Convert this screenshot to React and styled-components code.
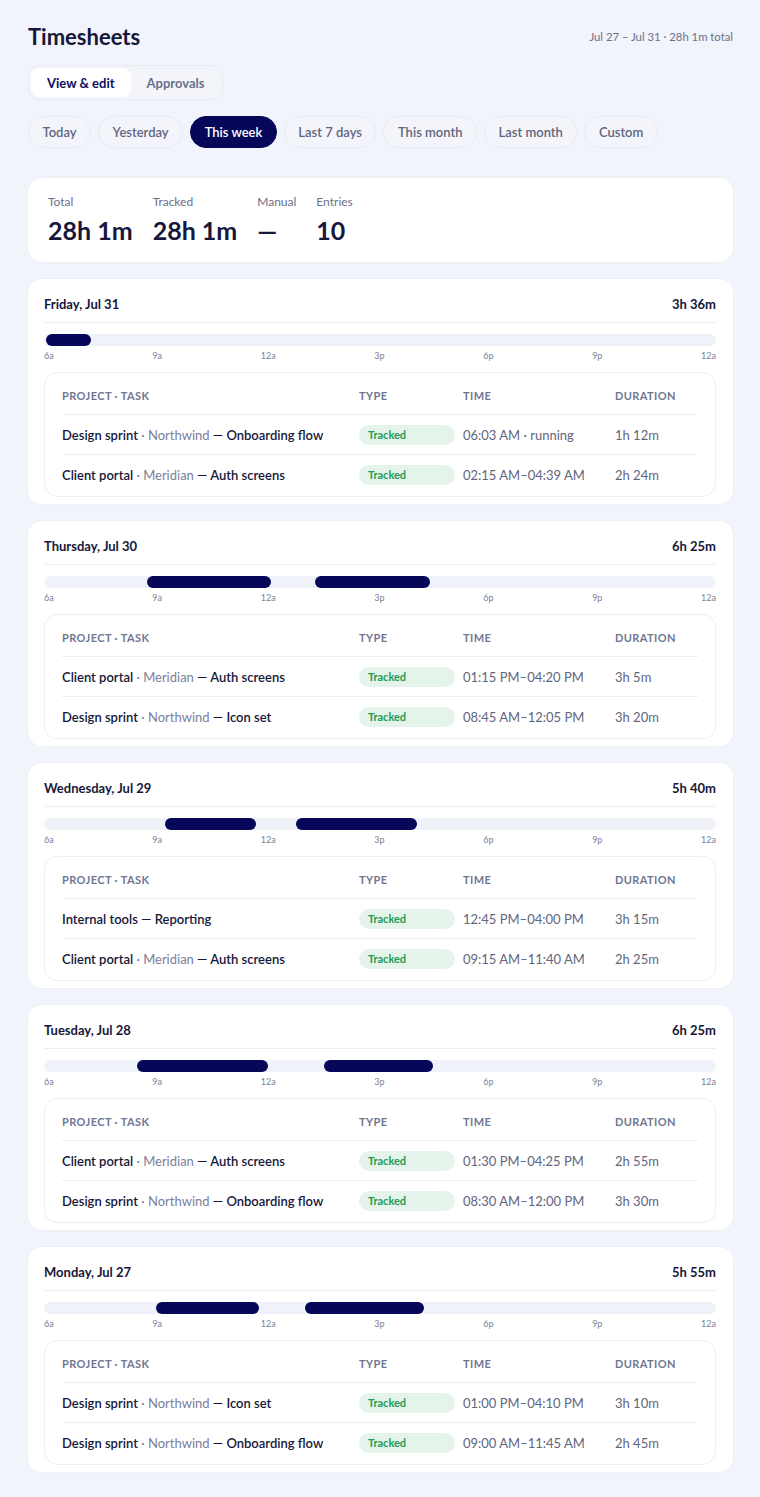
import React from "react";
import styled, { createGlobalStyle } from "styled-components";

const GlobalStyle = createGlobalStyle`
  html, body {
    margin: 0;
    padding: 0;
    background: #f2f4fb;
  }
  body {
    font-family: Lato, "Noto Sans", sans-serif;
    color: #16173a;
    -webkit-font-smoothing: antialiased;
  }
`;

const DAY_START = 6;
const DAY_HOURS = 18;

const days = [
  {
    title: "Friday, Jul 31",
    total: "3h 36m",
    bars: [[6.05, 7.25]],
    entries: [
      { project: "Design sprint", client: "Northwind", task: "Onboarding flow", time: "06:03 AM · running", duration: "1h 12m" },
      { project: "Client portal", client: "Meridian", task: "Auth screens", time: "02:15 AM–04:39 AM", duration: "2h 24m" },
    ],
  },
  {
    title: "Thursday, Jul 30",
    total: "6h 25m",
    bars: [[8.75, 12.083], [13.25, 16.333]],
    entries: [
      { project: "Client portal", client: "Meridian", task: "Auth screens", time: "01:15 PM–04:20 PM", duration: "3h 5m" },
      { project: "Design sprint", client: "Northwind", task: "Icon set", time: "08:45 AM–12:05 PM", duration: "3h 20m" },
    ],
  },
  {
    title: "Wednesday, Jul 29",
    total: "5h 40m",
    bars: [[9.25, 11.667], [12.75, 16]],
    entries: [
      { project: "Internal tools", task: "Reporting", time: "12:45 PM–04:00 PM", duration: "3h 15m" },
      { project: "Client portal", client: "Meridian", task: "Auth screens", time: "09:15 AM–11:40 AM", duration: "2h 25m" },
    ],
  },
  {
    title: "Tuesday, Jul 28",
    total: "6h 25m",
    bars: [[8.5, 12], [13.5, 16.417]],
    entries: [
      { project: "Client portal", client: "Meridian", task: "Auth screens", time: "01:30 PM–04:25 PM", duration: "2h 55m" },
      { project: "Design sprint", client: "Northwind", task: "Onboarding flow", time: "08:30 AM–12:00 PM", duration: "3h 30m" },
    ],
  },
  {
    title: "Monday, Jul 27",
    total: "5h 55m",
    bars: [[9, 11.75], [13, 16.167]],
    entries: [
      { project: "Design sprint", client: "Northwind", task: "Icon set", time: "01:00 PM–04:10 PM", duration: "3h 10m" },
      { project: "Design sprint", client: "Northwind", task: "Onboarding flow", time: "09:00 AM–11:45 AM", duration: "2h 45m" },
    ],
  },
];

const ranges = ["Today", "Yesterday", "This week", "Last 7 days", "This month", "Last month", "Custom"];
const hourLabels = ["6a", "9a", "12a", "3p", "6p", "9p", "12a"];

const Page = styled.div`
  padding: 24px 27px 24px 28px;
`;

const TopBar = styled.header`
  display: flex;
  align-items: center;
  justify-content: space-between;
  height: 24px;
`;

const Title = styled.h1`
  margin: 0;
  font-size: 22px;
  font-weight: 700;
  color: #16173a;
`;

const Meta = styled.span`
  font-size: 11.3px;
  color: #6b7088;
`;

const Segmented = styled.div`
  display: flex;
  width: fit-content;
  margin-top: 17px;
  padding: 2px;
  border-radius: 12px;
  border: 1px solid #e9ebf4;
  background: #f3f5fb;
`;

const SegButton = styled.button`
  height: 29px;
  padding: 0 16px;
  border: 0;
  border-radius: 9px;
  font-family: inherit;
  font-size: 13px;
  font-weight: 700;
  background: ${(p) => (p.$active ? "#ffffff" : "transparent")};
  color: ${(p) => (p.$active ? "#0d0d5e" : "#687089")};
`;

const RangeRow = styled.div`
  display: flex;
  gap: 7px;
  margin-top: 16px;
`;

const Pill = styled.button`
  height: 32px;
  padding: 0 13.5px;
  border-radius: 16px;
  border: 1px solid ${(p) => (p.$active ? "#07075a" : "#e9ebf4")};
  background: ${(p) => (p.$active ? "#07075a" : "#f3f5fb")};
  color: ${(p) => (p.$active ? "#ffffff" : "#5f667f")};
  font-family: inherit;
  font-size: 13px;
  font-weight: 600;
`;

const Card = styled.section`
  background: #ffffff;
  border-radius: 14px;
  box-shadow: 0 0 0 1px #eef0f6;
`;

const StatsCard = styled(Card)`
  margin-top: 30px;
  display: flex;
  gap: 20px;
  padding: 17px 20px;
`;

const Stat = styled.div`
  display: flex;
  flex-direction: column;
  gap: 6px;
`;

const StatLabel = styled.span`
  font-size: 12px;
  line-height: 14px;
  color: #6b7088;
`;

const StatValue = styled.span`
  font-size: 25px;
  line-height: 30px;
  font-weight: 700;
  color: #16173a;
`;

const DayList = styled.div`
  display: flex;
  flex-direction: column;
  gap: 17px;
  margin-top: 17px;
`;

const DayCard = styled(Card)`
  padding: 16px 17px 7px 16px;
`;

const DayHeader = styled.div`
  display: flex;
  justify-content: space-between;
  align-items: center;
  height: 18px;
  padding-bottom: 9px;
  border-bottom: 1px solid #eceef5;
  font-size: 13px;
  font-weight: 700;
  color: #16173a;
`;

const Track = styled.div`
  position: relative;
  height: 12px;
  margin-top: 11px;
  border-radius: 6px;
  background: #f0f2f9;
`;

const Bar = styled.div`
  position: absolute;
  top: 0;
  bottom: 0;
  border-radius: 6px;
  background: #07075a;
`;

const HourScale = styled.div`
  display: flex;
  justify-content: space-between;
  margin-top: 4px;
  font-size: 9px;
  line-height: 12px;
  color: #7a7f95;
`;

const Table = styled.div`
  margin-top: 10px;
  padding: 3px 17px 2px;
  border: 1px solid #eceef5;
  border-radius: 13px;
`;

const Row = styled.div`
  display: grid;
  grid-template-columns: 297px 104px 152px 1fr;
  align-items: center;
  box-sizing: border-box;
  height: ${(p) => (p.$head ? 38 : 40)}px;
  font-size: 13px;
  & + & {
    border-top: 1px solid #eceef5;
  }
`;

const HeadCell = styled.span`
  font-size: 11px;
  font-weight: 700;
  letter-spacing: 0.4px;
  text-transform: uppercase;
  color: #707791;
`;

const Strong = styled.span`
  font-weight: 600;
  color: #16173a;
`;

const Muted = styled.span`
  color: #7b8099;
`;

const Badge = styled.span`
  display: inline-flex;
  align-items: center;
  width: 96px;
  height: 20px;
  padding-left: 9px;
  box-sizing: border-box;
  border-radius: 10px;
  background: #e4f4ea;
  color: #1f9a57;
  font-size: 11px;
  font-weight: 700;
`;

const Cell = styled.span`
  color: #5f657e;
`;

const pct = (h) => ((h - DAY_START) / DAY_HOURS) * 100;

function Day({ day }) {
  return (
    <DayCard>
      <DayHeader>
        <span>{day.title}</span>
        <span>{day.total}</span>
      </DayHeader>
      <Track>
        {day.bars.map(([from, to], i) => (
          <Bar key={i} style={{ left: `${pct(from)}%`, width: `${pct(to) - pct(from)}%` }} />
        ))}
      </Track>
      <HourScale>
        {hourLabels.map((l, i) => (
          <span key={i}>{l}</span>
        ))}
      </HourScale>
      <Table>
        <Row $head>
          <HeadCell>Project · Task</HeadCell>
          <HeadCell>Type</HeadCell>
          <HeadCell>Time</HeadCell>
          <HeadCell>Duration</HeadCell>
        </Row>
        {day.entries.map((e, i) => (
          <Row key={i}>
            <span>
              <Strong>{e.project}</Strong>
              {e.client && <Muted> · {e.client}</Muted>}
              <Strong> — {e.task}</Strong>
            </span>
            <span>
              <Badge>Tracked</Badge>
            </span>
            <Cell>{e.time}</Cell>
            <Cell>{e.duration}</Cell>
          </Row>
        ))}
      </Table>
    </DayCard>
  );
}

export default function App() {
  return (
    <>
      <GlobalStyle />
      <Page>
        <TopBar>
          <Title>Timesheets</Title>
          <Meta>Jul 27 – Jul 31 · 28h 1m total</Meta>
        </TopBar>
        <Segmented>
          <SegButton $active>View &amp; edit</SegButton>
          <SegButton>Approvals</SegButton>
        </Segmented>
        <RangeRow>
          {ranges.map((r) => (
            <Pill key={r} $active={r === "This week"}>
              {r}
            </Pill>
          ))}
        </RangeRow>
        <StatsCard>
          <Stat>
            <StatLabel>Total</StatLabel>
            <StatValue>28h 1m</StatValue>
          </Stat>
          <Stat>
            <StatLabel>Tracked</StatLabel>
            <StatValue>28h 1m</StatValue>
          </Stat>
          <Stat>
            <StatLabel>Manual</StatLabel>
            <StatValue>—</StatValue>
          </Stat>
          <Stat>
            <StatLabel>Entries</StatLabel>
            <StatValue>10</StatValue>
          </Stat>
        </StatsCard>
        <DayList>
          {days.map((d) => (
            <Day key={d.title} day={d} />
          ))}
        </DayList>
      </Page>
    </>
  );
}
